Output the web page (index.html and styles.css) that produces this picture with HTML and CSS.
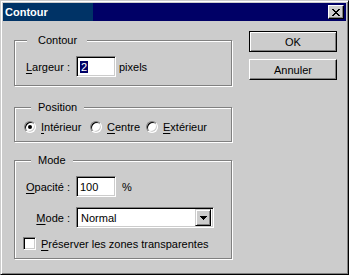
FILE: index.html
```html
<!DOCTYPE html>
<html lang="fr">
<head>
    <meta charset="UTF-8">
    <title>Contour</title>
    <link rel="stylesheet" href="styles.css">
</head>
<body>
    <div class="window">
        <div class="titlebar">
            <span class="title">Contour</span>
            <span class="close">
                <svg width="8" height="7" viewBox="0 0 8 7" shape-rendering="crispEdges">
                    <path d="M0 0h2v1h-2zM6 0h2v1h-2zM1 1h2v1h-2zM5 1h2v1h-2zM2 2h4v1h-4zM3 3h2v1h-2zM2 4h4v1h-4zM1 5h2v1h-2zM5 5h2v1h-2zM0 6h2v1h-2zM6 6h2v1h-2z" fill="#000"/>
                </svg>
            </span>
        </div>
        <div class="content">
            <div class="groups">
                <div class="group group-contour">
                    <span class="legend legend-wide">Contour</span>
                    <div class="row">
                        <span class="label"><u>L</u>argeur :</span>
                        <span class="field"><span class="sel">2</span></span>
                        <span class="unit">pixels</span>
                    </div>
                </div>
                <div class="group group-position">
                    <span class="legend">Position</span>
                    <div class="radios">
                        <span class="radio-item item-1"><span class="radio checked"></span><span><u>I</u>ntérieur</span></span>
                        <span class="radio-item item-2"><span class="radio"></span><span><u>C</u>entre</span></span>
                        <span class="radio-item"><span class="radio"></span><span><u>E</u>xtérieur</span></span>
                    </div>
                </div>
                <div class="group group-mode">
                    <span class="legend">Mode</span>
                    <div class="row">
                        <span class="label"><u>O</u>pacité :</span>
                        <span class="field">100</span>
                        <span class="unit unit-pct">%</span>
                    </div>
                    <div class="row row-mode">
                        <span class="label"><u>M</u>ode :</span>
                        <span class="select">
                            <span class="select-value">Normal</span>
                            <span class="select-btn">
                                <svg width="7" height="4" viewBox="0 0 7 4" shape-rendering="crispEdges">
                                    <path d="M0 0h7v1h-7zM1 1h5v1h-5zM2 2h3v1h-3zM3 3h1v1h-1z" fill="#000"/>
                                </svg>
                            </span>
                        </span>
                    </div>
                    <div class="check-row">
                        <span class="checkbox"></span>
                        <span><u>P</u>réserver les zones transparentes</span>
                    </div>
                </div>
            </div>
            <div class="buttons">
                <button class="btn btn-default">OK</button>
                <button class="btn">Annuler</button>
            </div>
        </div>
    </div>
</body>
</html>
```

FILE: styles.css
```css
body {
    margin: 0;
    font-family: "Liberation Sans", Arial, sans-serif;
    font-size: 11px;
    color: #000;
    background: #cccccc;
}
u { text-decoration-thickness: 1px; text-underline-offset: 2px; }

.window {
    width: 349px;
    height: 275px;
    box-sizing: border-box;
    background: #cccccc;
    border: 1px solid;
    border-color: #cccccc #000 #000 #cccccc;
    box-shadow: inset 1px 1px 0 #fff, inset -1px -1px 0 #808080;
    padding: 2px;
}
.titlebar {
    height: 18px;
    display: flex;
    align-items: center;
    justify-content: space-between;
    padding: 0 2px 0 2px;
    background: linear-gradient(to right, #003366 90px, #000066 90px);
}
.title {
    color: #fff;
    font-weight: bold;
    font-size: 11px;
}
.close {
    width: 16px;
    height: 14px;
    box-sizing: border-box;
    background: #cccccc;
    display: flex;
    align-items: center;
    justify-content: center;
    border: 1px solid;
    border-color: #fff #000 #000 #fff;
    box-shadow: inset -1px -1px 0 #808080;
}

.content {
    display: flex;
    padding: 10px 0 0 11px;
}
.groups {
    width: 218px;
    padding-top: 9px;
}
.buttons {
    display: flex;
    flex-direction: column;
    gap: 7px;
    margin-left: 17px;
}

.group {
    position: relative;
    border: 1px solid #808080;
    box-shadow: 1px 1px 0 #fff, inset 1px 1px 0 #fff;
    padding: 15px 0 8px 8px;
}
.group-position { margin-top: 21px; padding: 13px 0 8px 9px; }
.group-mode { margin-top: 18px; padding-left: 0; }
.group-contour { padding-left: 0; }
.legend {
    position: absolute;
    top: -7px;
    left: 16px;
    padding: 0 7px;
    line-height: 13px;
    background: #cccccc;
}
.legend-wide { left: 12px; padding: 0 10px 0 11px; }

.row {
    display: flex;
    align-items: center;
    height: 21px;
}
.row-mode { margin-top: 10px; }
.label {
    width: 55px;
    margin-right: 6px;
    text-align: right;
}
.field {
    width: 40px;
    height: 21px;
    box-sizing: border-box;
    background: #fff;
    border: 1px solid;
    border-color: #808080 #fff #fff #808080;
    box-shadow: inset 1px 1px 0 #000, inset -1px -1px 0 #cccccc;
    padding: 3px 0 0 3px;
    line-height: 14px;
}
.sel {
    background: #000066;
    color: #fff;
    padding: 0 1px;
}
.unit { margin-left: 3px; }
.unit-pct { margin-left: 6px; }

.radios {
    display: flex;
    align-items: center;
    height: 12px;
}
.radio-item {
    display: flex;
    align-items: center;
    gap: 5px;
}
.item-1 { width: 66px; }
.item-2 { width: 56px; }
.radio {
    width: 12px;
    height: 12px;
    box-sizing: border-box;
    border-radius: 50%;
    border: 1px solid;
    border-color: #808080 #fff #fff #808080;
    box-shadow: inset 1px 1px 0 #000, inset -1px -1px 0 #cccccc;
    background: #fff;
    display: flex;
    align-items: center;
    justify-content: center;
}
.radio.checked::after {
    content: "";
    width: 4px;
    height: 4px;
    border-radius: 50%;
    background: #000;
}

.select {
    width: 138px;
    height: 21px;
    box-sizing: border-box;
    display: flex;
    align-items: center;
    justify-content: space-between;
    background: #fff;
    border: 1px solid;
    border-color: #808080 #fff #fff #808080;
    box-shadow: inset 1px 1px 0 #000, inset -1px -1px 0 #cccccc;
    padding: 2px 2px 2px 4px;
}
.select-btn {
    width: 16px;
    height: 17px;
    box-sizing: border-box;
    background: #cccccc;
    border: 1px solid;
    border-color: #cccccc #000 #000 #cccccc;
    box-shadow: inset 1px 1px 0 #fff, inset -1px -1px 0 #808080;
    display: flex;
    align-items: center;
    justify-content: center;
}

.check-row {
    display: flex;
    align-items: center;
    gap: 5px;
    height: 13px;
    margin: 9px 0 0 8px;
}
.checkbox {
    width: 13px;
    height: 13px;
    box-sizing: border-box;
    background: #fff;
    border: 1px solid;
    border-color: #808080 #fff #fff #808080;
    box-shadow: inset 1px 1px 0 #000, inset -1px -1px 0 #cccccc;
}

.btn {
    width: 88px;
    height: 21px;
    box-sizing: border-box;
    margin: 0;
    padding: 0;
    font: inherit;
    color: #000;
    background: #cccccc;
    border: 1px solid;
    border-color: #fff #000 #000 #fff;
    box-shadow: inset -1px -1px 0 #808080;
}
.btn-default {
    border-color: #000;
    box-shadow: inset 1px 1px 0 #fff, inset -1px -1px 0 #808080;
}
```
